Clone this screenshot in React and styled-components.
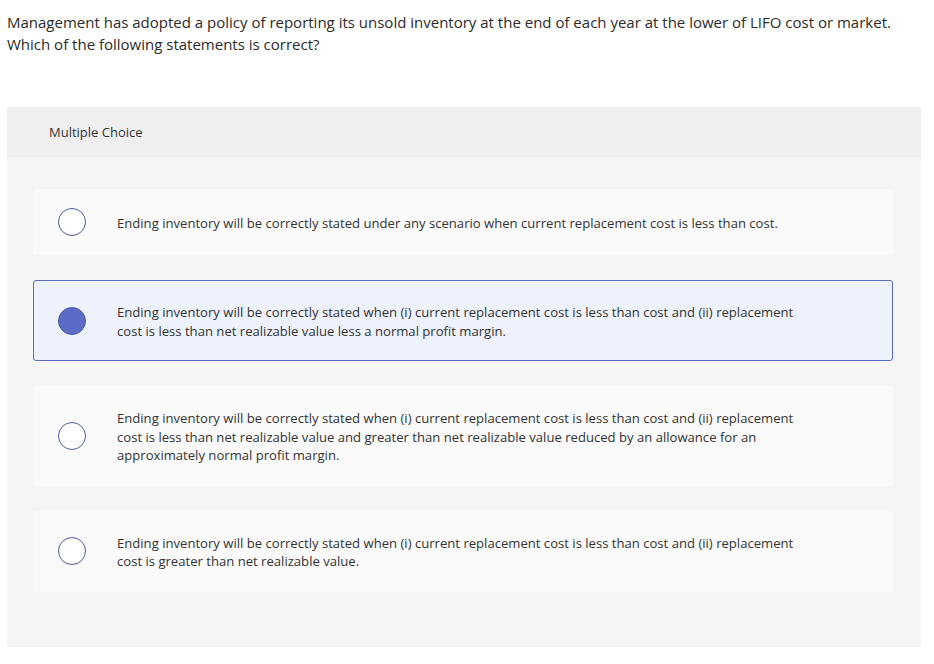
import React from 'react'
import styled, { createGlobalStyle, css } from 'styled-components'

const GlobalStyle = createGlobalStyle`
  body {
    margin: 0;
    background: #ffffff;
    font-family: "Open Sans", "Liberation Sans", Arial, sans-serif;
    color: #333333;
  }
`

const Page = styled.div`
  width: 934px;
  padding: 11px 13px 0 7px;
  box-sizing: border-box;
`

const Question = styled.p`
  margin: 0;
  font-size: 15px;
  line-height: 22px;
  color: #2b2b2b;
`

const Panel = styled.div`
  margin-top: 52px;
  background: #f5f5f5;
  border-radius: 3px;
  padding-bottom: 55px;
`

const PanelHeader = styled.div`
  height: 50px;
  display: flex;
  align-items: center;
  padding-left: 42px;
  background: #efefef;
  border-radius: 3px 3px 0 0;
  font-size: 13px;
  color: #333333;
`

const Choices = styled.div`
  display: flex;
  flex-direction: column;
  gap: 25px;
  padding: 32px 28px 0 26px;
`

const Choice = styled.label`
  display: flex;
  align-items: center;
  min-height: 66px;
  box-sizing: border-box;
  padding: 22px 40px 20px 24px;
  background: #fafafa;
  border: 1px solid #fafafa;
  border-radius: 3px;
  cursor: pointer;
  ${props => props.selected && css`
    background: #eef2fc;
    border-color: #5b6bc6;
  `}
`

const Radio = styled.span`
  flex: none;
  width: 28px;
  height: 28px;
  box-sizing: border-box;
  border-radius: 50%;
  border: 1.5px solid #4b5b9e;
  background: #ffffff;
  margin: -6px 31px -4px 0;
  ${props => props.selected && css`
    background: #5b6bc6;
    border-color: #4a59a8;
  `}
`

const ChoiceText = styled.span`
  font-size: 13.1px;
  line-height: 18.5px;
  color: #333333;
  max-width: 685px;
`

const choices = [
  'Ending inventory will be correctly stated under any scenario when current replacement cost is less than cost.',
  'Ending inventory will be correctly stated when (i) current replacement cost is less than cost and (ii) replacement cost is less than net realizable value less a normal profit margin.',
  'Ending inventory will be correctly stated when (i) current replacement cost is less than cost and (ii) replacement cost is less than net realizable value and greater than net realizable value reduced by an allowance for an approximately normal profit margin.',
  'Ending inventory will be correctly stated when (i) current replacement cost is less than cost and (ii) replacement cost is greater than net realizable value.'
]

const App = () => {
  const [selected, setSelected] = React.useState(1)

  return (
    <Page>
      <GlobalStyle />
      <Question>
        Management has adopted a policy of reporting its unsold inventory at the end of each year at the lower of LIFO cost or market.
        <br />
        Which of the following statements is correct?
      </Question>
      <Panel>
        <PanelHeader>Multiple Choice</PanelHeader>
        <Choices>
          {choices.map((text, i) => (
            <Choice key={i} selected={i === selected} onClick={() => setSelected(i)}>
              <Radio selected={i === selected} />
              <ChoiceText>{text}</ChoiceText>
            </Choice>
          ))}
        </Choices>
      </Panel>
    </Page>
  )
}

export default App
